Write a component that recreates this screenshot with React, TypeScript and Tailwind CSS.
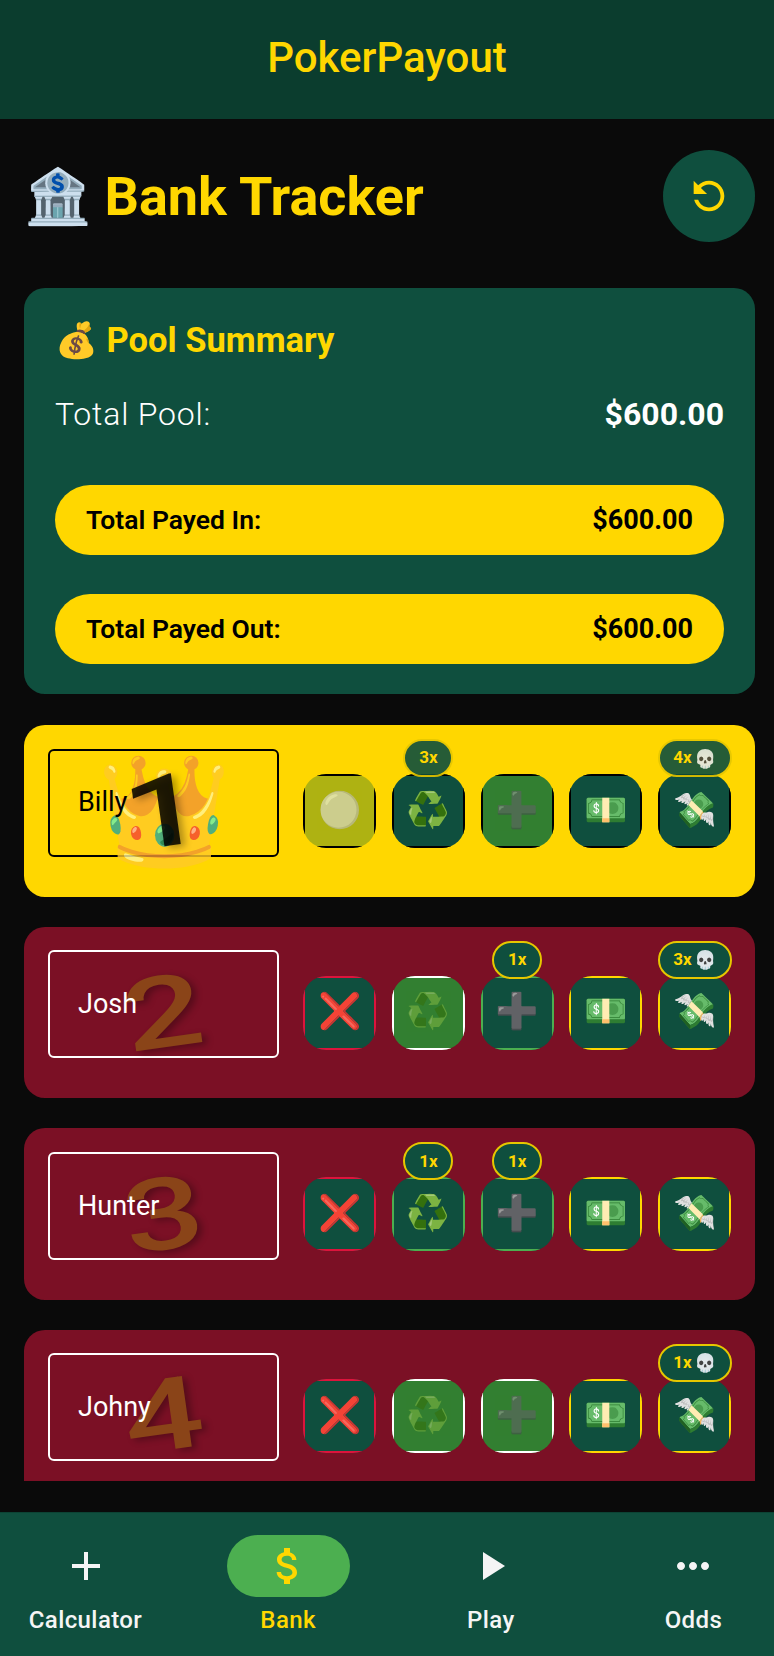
const font = "font-['Roboto',sans-serif]";

type Cell = { emoji: string; edge: string; fill?: string; dim?: boolean; badge?: string; skull?: boolean };
type Player = { name: string; rank: string; first?: boolean; cells: Cell[] };

const RED = "bg-[#dc143c]";
const WHITE = "bg-white";
const GREEN = "bg-[#4caf50]";
const GOLD = "bg-[#ffd700]";
const BLACK = "bg-black";
const ON = "bg-[#327f31]";

const players: Player[] = [
  {
    name: "Billy",
    rank: "1",
    first: true,
    cells: [
      { emoji: "⚪", edge: BLACK, fill: "bg-[#aeb212]", dim: true },
      { emoji: "♻️", edge: BLACK, badge: "3x" },
      { emoji: "➕", edge: BLACK, fill: ON, dim: true },
      { emoji: "💵", edge: BLACK },
      { emoji: "💸", edge: BLACK, badge: "4x", skull: true },
    ],
  },
  {
    name: "Josh",
    rank: "2",
    cells: [
      { emoji: "❌", edge: RED },
      { emoji: "♻️", edge: WHITE, fill: ON, dim: true },
      { emoji: "➕", edge: GREEN, badge: "1x" },
      { emoji: "💵", edge: GOLD },
      { emoji: "💸", edge: GOLD, badge: "3x", skull: true },
    ],
  },
  {
    name: "Hunter",
    rank: "3",
    cells: [
      { emoji: "❌", edge: RED },
      { emoji: "♻️", edge: GREEN, badge: "1x" },
      { emoji: "➕", edge: GREEN, badge: "1x" },
      { emoji: "💵", edge: GOLD },
      { emoji: "💸", edge: GOLD },
    ],
  },
  {
    name: "Johny",
    rank: "4",
    cells: [
      { emoji: "❌", edge: RED },
      { emoji: "♻️", edge: WHITE, fill: ON, dim: true },
      { emoji: "➕", edge: WHITE, fill: ON, dim: true },
      { emoji: "💵", edge: GOLD },
      { emoji: "💸", edge: GOLD, badge: "1x", skull: true },
    ],
  },
];

const navIcons = {
  add: "M19 13h-6v6h-2v-6H5v-2h6V5h2v6h6v2z",
  money:
    "M11.8 10.9c-2.27-.59-3-1.2-3-2.15 0-1.09 1.01-1.85 2.7-1.85 1.78 0 2.44.85 2.5 2.1h2.21c-.07-1.72-1.12-3.3-3.21-3.81V3h-3v2.16c-1.94.42-3.5 1.68-3.5 3.61 0 2.31 1.91 3.46 4.7 4.13 2.5.6 3 1.48 3 2.41 0 .69-.49 1.79-2.7 1.79-2.06 0-2.87-.92-2.98-2.1h-2.2c.12 2.19 1.76 3.42 3.68 3.83V21h3v-2.15c1.95-.37 3.5-1.5 3.5-3.55 0-2.84-2.43-3.81-4.7-4.4z",
  play: "M8 5v14l11-7z",
  more: "M6 10c-1.1 0-2 .9-2 2s.9 2 2 2 2-.9 2-2-.9-2-2-2zm12 0c-1.1 0-2 .9-2 2s.9 2 2 2 2-.9 2-2-.9-2-2-2zm-6 0c-1.1 0-2 .9-2 2s.9 2 2 2 2-.9 2-2-.9-2-2-2z",
};

function ActionCell({ cell, first }: { cell: Cell; first?: boolean }) {
  return (
    <div className="relative h-[74px] w-[73px]">
      {/* edge strips get clipped by the corners, so only the flat sides show colour */}
      <div
        className={`relative flex h-full w-full items-center justify-center overflow-hidden rounded-[23px] text-[35px] ${
          cell.fill ?? "bg-[#0f4f3e]"
        }`}
      >
        <span className={`absolute inset-x-0 top-0 h-[2px] ${cell.edge}`} />
        <span className={`absolute inset-x-0 bottom-0 h-[2px] ${cell.edge}`} />
        <span className={`absolute inset-y-0 left-0 w-[2px] ${cell.edge}`} />
        <span className={`absolute inset-y-0 right-0 w-[2px] ${cell.edge}`} />
        <span className={cell.dim ? "opacity-60" : ""}>{cell.emoji}</span>
      </div>
      {cell.badge && (
        <span
          className={`absolute left-1/2 top-[-35px] flex h-[38px] -translate-x-1/2 items-center justify-center gap-[2px] rounded-full border-[2.5px] border-[#e6c700] bg-[#0f4f3e] text-[17px] font-bold text-[#ffd700] ${
            cell.skull ? "w-[74px]" : "w-[50px]"
          } ${first ? "opacity-90" : ""}`}
        >
          {cell.badge}
          {cell.skull && <span className="text-[18px]">💀</span>}
        </span>
      )}
    </div>
  );
}

function PlayerCard({ player }: { player: Player }) {
  const first = player.first;
  return (
    <div
      className={`flex h-[171.67px] shrink-0 items-start justify-between rounded-[21px] px-6 pt-[23.5px] ${
        first ? "bg-[#ffd700]" : "bg-[#7b1025]"
      }`}
    >
      <div
        className={`relative flex h-[108px] w-[231px] items-center rounded-md border-2 pl-[28px] text-[27px] ${
          first ? "border-black text-black" : "border-white text-white"
        }`}
      >
        {first && (
          <span className="absolute left-0 top-[-2px] w-full text-center text-[108px] leading-[124px] opacity-80">
            👑
          </span>
        )}
        <span
          className={`absolute left-0 top-[11px] w-full rotate-[-8deg] scale-x-[1.4] text-center text-[100px] font-medium leading-none [text-shadow:3px_3px_6px_rgba(0,0,0,0.3)] ${
            first ? "text-black/85" : "text-[#8a4418]"
          }`}
        >
          {player.rank}
        </span>
        <span className="relative">{player.name}</span>
      </div>
      <div className="mt-[25.5px] flex gap-[15.7px]">
        {player.cells.map((cell, i) => (
          <ActionCell key={i} cell={cell} first={first} />
        ))}
      </div>
    </div>
  );
}

function PayRow({ label }: { label: string }) {
  return (
    <div className="flex h-[70px] items-center justify-between rounded-full bg-[#ffd700] px-[31px] text-black">
      <span className="text-[26.5px] font-semibold">{label}</span>
      <span className="text-[27px] font-bold">$600.00</span>
    </div>
  );
}

function NavItem({ label, d, active }: { label: string; d: string; active?: boolean }) {
  return (
    <div className={`flex w-[123px] flex-col items-center ${active ? "text-[#ffd700]" : "text-[#f5f5f5]"}`}>
      <div className={`flex h-[62px] w-[123px] items-center justify-center rounded-[31px] ${active ? "bg-[#4caf50]" : ""}`}>
        <svg width="48" height="48" viewBox="0 0 24 24" fill="currentColor">
          <path d={d} />
        </svg>
      </div>
      <span className="mt-[7px] whitespace-nowrap tracking-[0.4px]">{label}</span>
    </div>
  );
}

export default function App() {
  return (
    <div className={`flex h-[1656px] w-[774px] flex-col overflow-hidden bg-[#0a0a0a] ${font}`}>
      <header className="flex h-[119px] shrink-0 items-center justify-center bg-[#0b3d2e] pb-[4px] text-[42px] font-medium text-[#ffd700]">
        PokerPayout
      </header>
      <main className="flex h-[1362px] shrink-0 flex-col overflow-hidden pl-6 pr-[19px] pt-[31px]">
        <div className="flex h-[92px] shrink-0 items-center justify-between">
          <h1 className="text-[54px] font-bold text-[#ffd700]">🏦 Bank Tracker</h1>
          <button className="flex h-[92px] w-[92px] items-center justify-center rounded-full bg-[#0f4f3e] text-[#ffd700]">
            <svg width="46" height="46" viewBox="0 0 24 24" fill="currentColor" className="-scale-x-100">
              <path d="M17.65 6.35C16.2 4.9 14.21 4 12 4c-4.42 0-7.99 3.58-7.99 8s3.57 8 7.99 8c3.73 0 6.84-2.55 7.73-6h-2.08c-.82 2.33-3.04 4-5.65 4-3.31 0-6-2.69-6-6s2.69-6 6-6c1.66 0 3.14.69 4.22 1.78L13 11h7V4l-2.35 2.35z" />
            </svg>
          </button>
        </div>
        <section className="mt-[46px] flex h-[406px] shrink-0 flex-col rounded-[21px] bg-[#0f4f3e] px-[31px] pt-[27px]">
          <h2 className="text-[34.5px] font-bold text-[#ffd700]">💰 Pool Summary</h2>
          <div className="mt-[23px] flex items-center justify-between text-[32px] text-white">
            <span className="font-light tracking-[0.8px]">Total Pool:</span>
            <span className="font-bold">$600.00</span>
          </div>
          <div className="mt-[47px] flex flex-col gap-[39px]">
            <PayRow label="Total Payed In:" />
            <PayRow label="Total Payed Out:" />
          </div>
        </section>
        <div className="mt-[31px] flex flex-col gap-[30px]">
          {players.map((p) => (
            <PlayerCard key={p.name} player={p} />
          ))}
        </div>
      </main>
      <nav className="mt-[31px] flex h-[144px] shrink-0 justify-between border-t border-[#0c4334] bg-[#0f4f3e] pl-6 pr-[19px] pt-[22px] text-2xl font-medium">
        <NavItem label="Calculator" d={navIcons.add} />
        <NavItem label="Bank" d={navIcons.money} active />
        <NavItem label="Play" d={navIcons.play} />
        <NavItem label="Odds" d={navIcons.more} />
      </nav>
    </div>
  );
}
